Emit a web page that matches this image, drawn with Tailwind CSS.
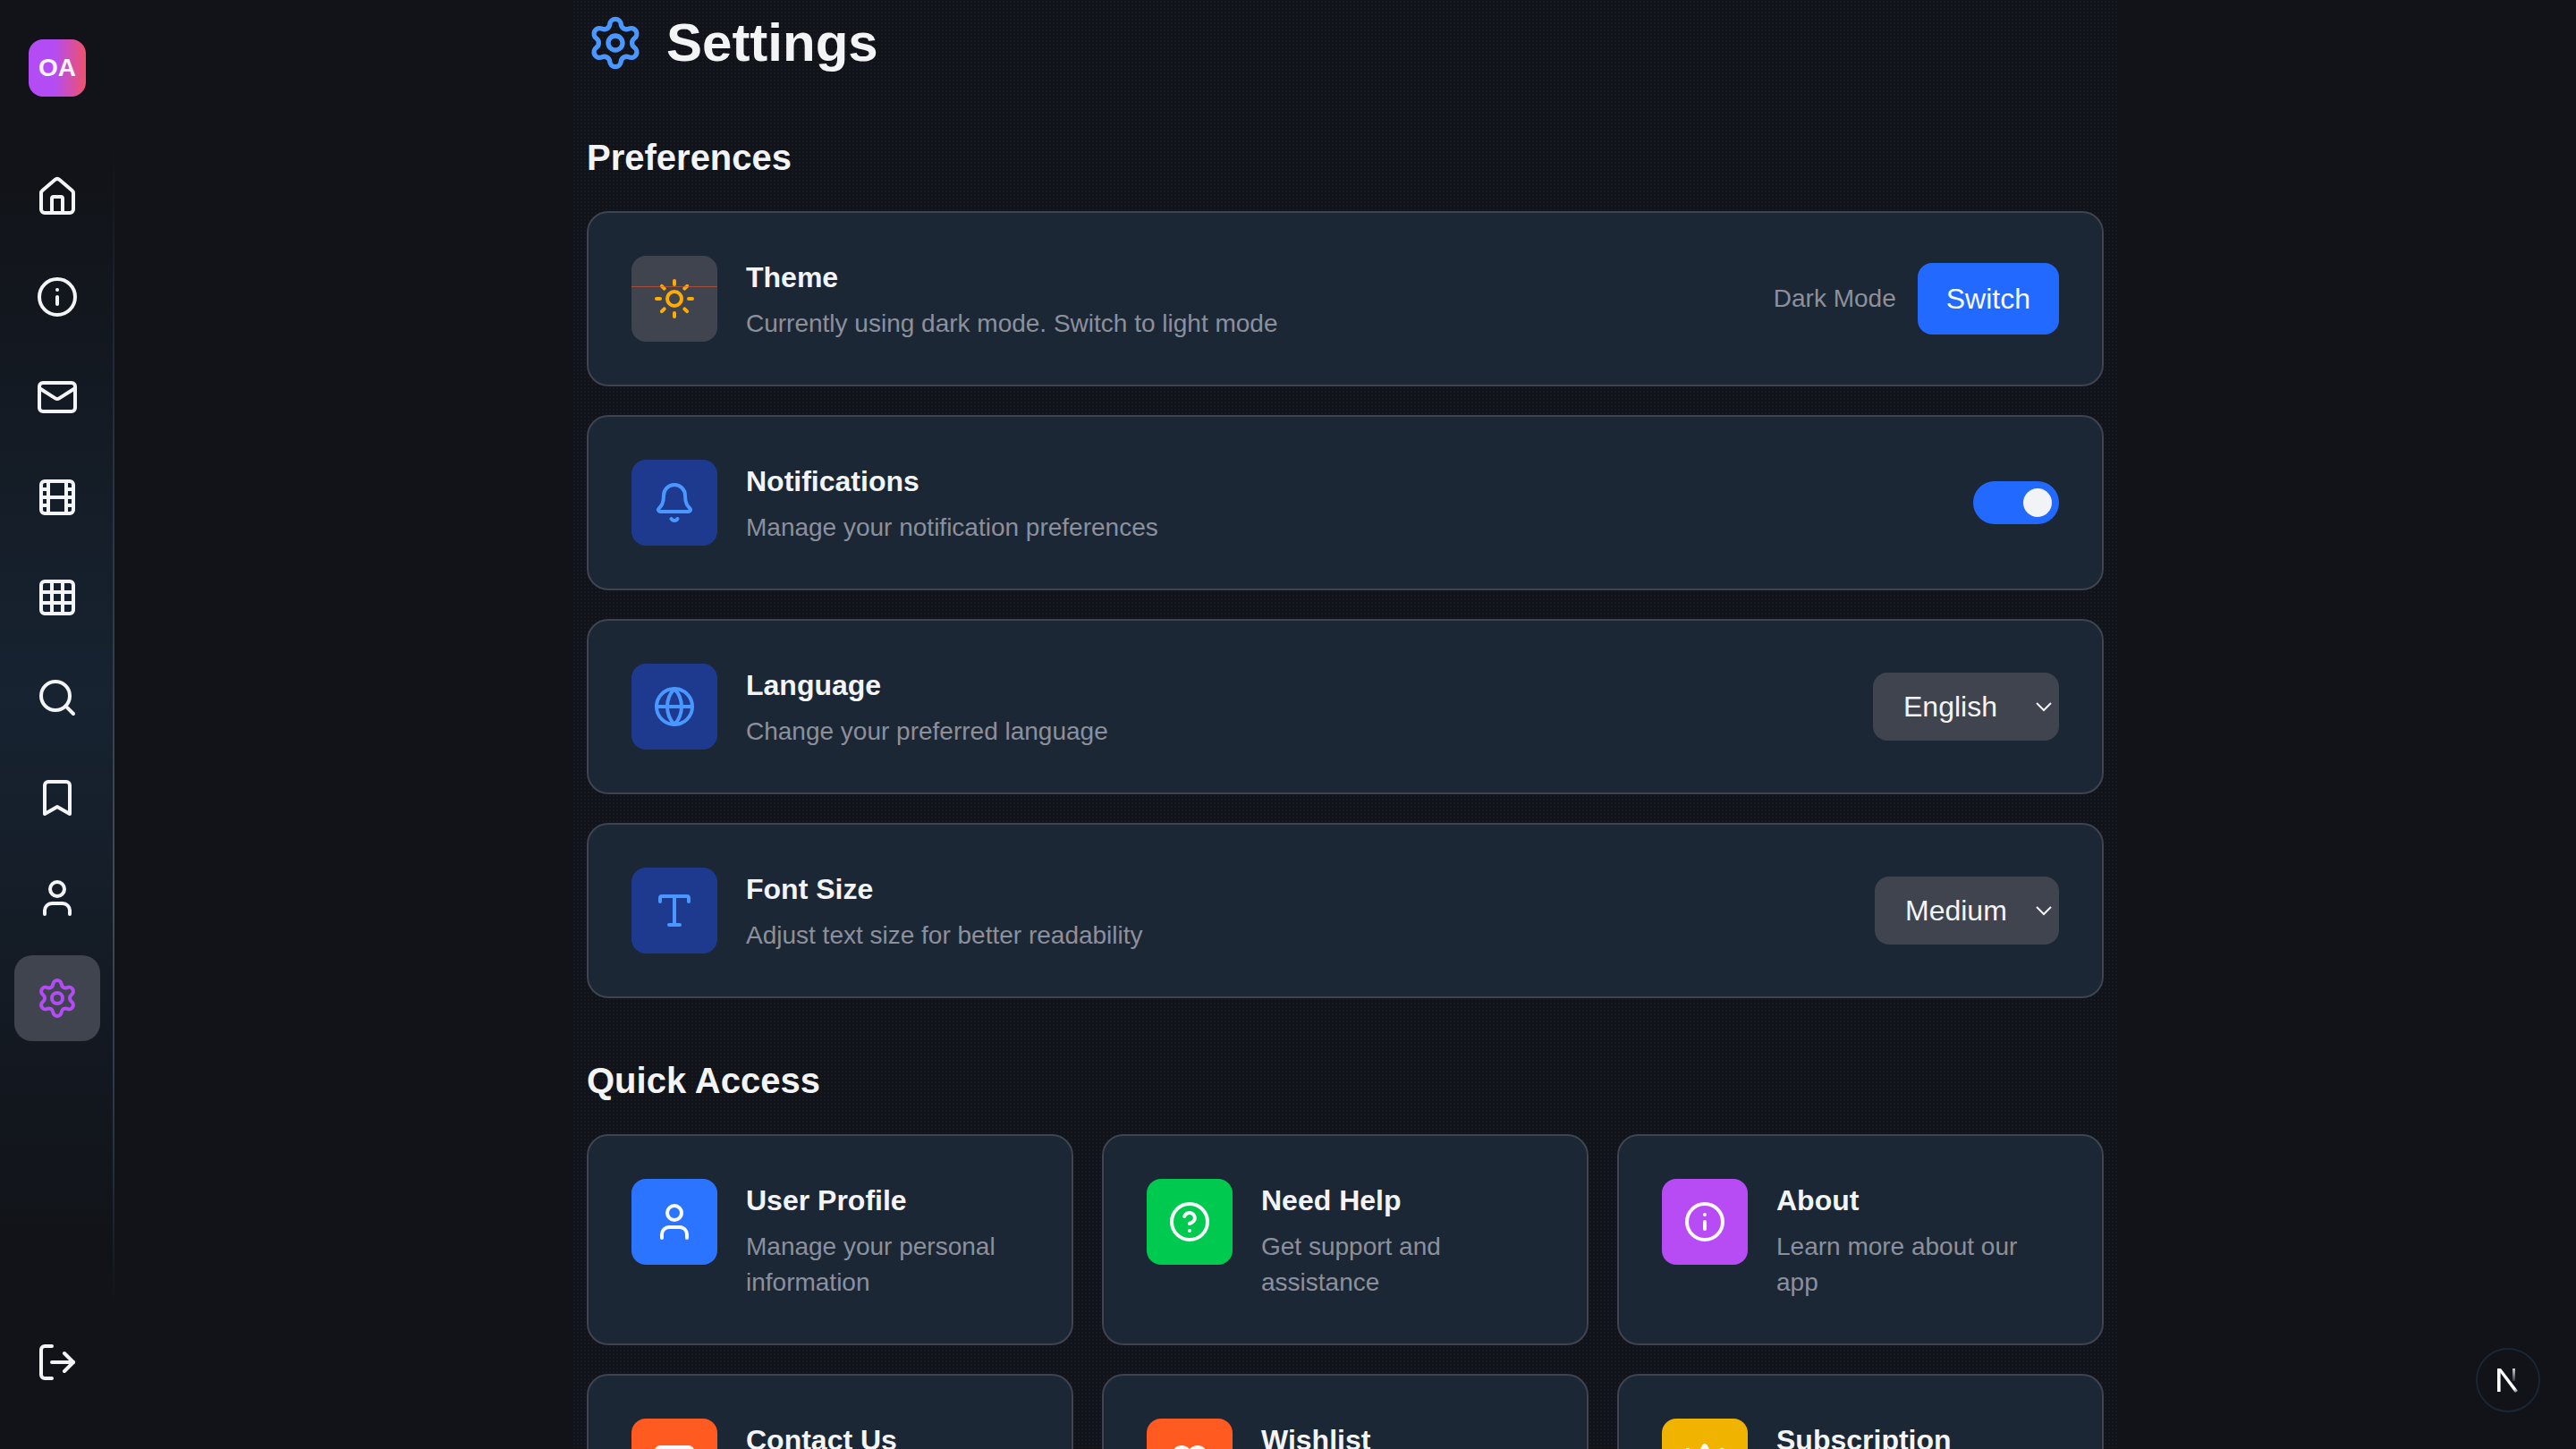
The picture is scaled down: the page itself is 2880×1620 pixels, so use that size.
<!doctype html>
<html lang="en">
<head>
<meta charset="utf-8">
<title>Settings</title>
<script src="https://cdn.jsdelivr.net/npm/@tailwindcss/browser@4"></script>
</head>
<body class="bg-[#111318] font-['Liberation_Sans',Arial,sans-serif] text-[#f3f4f6]">
<div class="relative flex h-[1620px] w-[2880px] overflow-hidden bg-[#111318]">

  <!-- Sidebar -->
  <aside class="relative flex h-full w-[128px] shrink-0 flex-col items-center bg-[linear-gradient(180deg,#111318_12%,#172331_48%,#111318_86%)] pt-[44px] pb-[49px]">
    <div class="absolute top-0 right-0 h-full w-[2px] bg-[linear-gradient(180deg,transparent_10%,#2a3443_35%,#454a56_62%,#2a3443_78%,transparent_90%)]"></div>
    <div class="flex h-16 w-16 items-center justify-center rounded-2xl bg-[linear-gradient(90deg,#b44cf5_45%,#f0526a_100%)] text-[28px] font-bold text-[#f3f4f6]">OA</div>
    <nav class="mt-16 flex flex-col gap-4">
      <a class="flex h-24 w-24 items-center justify-center rounded-[20px]"><svg class="h-12 w-12" viewBox="0 0 24 24" fill="none" stroke="currentColor" stroke-width="2" stroke-linecap="round" stroke-linejoin="round"><path d="M15 21v-8a1 1 0 0 0-1-1h-4a1 1 0 0 0-1 1v8"/><path d="M3 10a2 2 0 0 1 .709-1.528l7-5.999a2 2 0 0 1 2.582 0l7 5.999A2 2 0 0 1 21 10v9a2 2 0 0 1-2 2H5a2 2 0 0 1-2-2z"/></svg></a>
      <a class="flex h-24 w-24 items-center justify-center rounded-[20px]"><svg class="h-12 w-12" viewBox="0 0 24 24" fill="none" stroke="currentColor" stroke-width="2" stroke-linecap="round" stroke-linejoin="round"><circle cx="12" cy="12" r="10"/><path d="M12 16v-4"/><path d="M12 8h.01"/></svg></a>
      <a class="flex h-24 w-24 items-center justify-center rounded-[20px]"><svg class="h-12 w-12" viewBox="0 0 24 24" fill="none" stroke="currentColor" stroke-width="2" stroke-linecap="round" stroke-linejoin="round"><rect width="20" height="16" x="2" y="4" rx="2"/><path d="m22 7-8.97 5.7a1.94 1.94 0 0 1-2.06 0L2 7"/></svg></a>
      <a class="flex h-24 w-24 items-center justify-center rounded-[20px]"><svg class="h-12 w-12" viewBox="0 0 24 24" fill="none" stroke="currentColor" stroke-width="2" stroke-linecap="round" stroke-linejoin="round"><rect width="18" height="18" x="3" y="3" rx="2"/><path d="M7 3v18"/><path d="M3 7.5h4"/><path d="M3 12h18"/><path d="M3 16.5h4"/><path d="M17 3v18"/><path d="M17 7.5h4"/><path d="M17 16.5h4"/></svg></a>
      <a class="flex h-24 w-24 items-center justify-center rounded-[20px]"><svg class="h-12 w-12" viewBox="0 0 24 24" fill="none" stroke="currentColor" stroke-width="2" stroke-linecap="round" stroke-linejoin="round"><rect width="18" height="18" x="3" y="3" rx="2"/><path d="M3 9h18"/><path d="M3 15h18"/><path d="M9 3v18"/><path d="M15 3v18"/></svg></a>
      <a class="flex h-24 w-24 items-center justify-center rounded-[20px]"><svg class="h-12 w-12" viewBox="0 0 24 24" fill="none" stroke="currentColor" stroke-width="2" stroke-linecap="round" stroke-linejoin="round"><circle cx="11" cy="11" r="8"/><path d="m21 21-4.3-4.3"/></svg></a>
      <a class="flex h-24 w-24 items-center justify-center rounded-[20px]"><svg class="h-12 w-12" viewBox="0 0 24 24" fill="none" stroke="currentColor" stroke-width="2" stroke-linecap="round" stroke-linejoin="round"><path d="m19 21-7-4-7 4V5a2 2 0 0 1 2-2h10a2 2 0 0 1 2 2v16z"/></svg></a>
      <a class="flex h-24 w-24 items-center justify-center rounded-[20px]"><svg class="h-12 w-12" viewBox="0 0 24 24" fill="none" stroke="currentColor" stroke-width="2" stroke-linecap="round" stroke-linejoin="round"><path d="M19 21v-2a4 4 0 0 0-4-4H9a4 4 0 0 0-4 4v2"/><circle cx="12" cy="7" r="4"/></svg></a>
      <a class="flex h-24 w-24 items-center justify-center rounded-[20px] bg-[#40444f] text-[#b44cf5]"><svg class="h-12 w-12" viewBox="0 0 24 24" fill="none" stroke="currentColor" stroke-width="2" stroke-linecap="round" stroke-linejoin="round"><path d="M9.671 4.136a2.34 2.34 0 0 1 4.659 0 2.34 2.34 0 0 0 3.319 1.915 2.34 2.34 0 0 1 2.33 4.033 2.34 2.34 0 0 0 0 3.831 2.34 2.34 0 0 1-2.33 4.033 2.34 2.34 0 0 0-3.319 1.915 2.34 2.34 0 0 1-4.659 0 2.34 2.34 0 0 0-3.32-1.915 2.34 2.34 0 0 1-2.33-4.033 2.34 2.34 0 0 0 0-3.831A2.34 2.34 0 0 1 6.35 6.051a2.34 2.34 0 0 0 3.32-1.915"/><circle cx="12" cy="12" r="3"/></svg></a>
    </nav>
    <a class="mt-auto flex h-24 w-24 items-center justify-center rounded-[20px]"><svg class="h-12 w-12" viewBox="0 0 24 24" fill="none" stroke="currentColor" stroke-width="2" stroke-linecap="round" stroke-linejoin="round"><path d="m16 17 5-5-5-5"/><path d="M21 12H9"/><path d="M9 21H5a2 2 0 0 1-2-2V5a2 2 0 0 1 2-2h4"/></svg></a>
  </aside>

  <!-- Main -->
  <main class="flex h-full min-w-0 flex-1 justify-center overflow-hidden">
    <div class="h-full w-[1728px] bg-[radial-gradient(circle,#151b24_1px,transparent_1.3px)] bg-[size:4px_4px] px-4 pt-4">

      <div class="flex h-16 items-center gap-[25px]">
        <svg class="h-16 w-16 text-[#4a98ff]" viewBox="0 0 24 24" fill="none" stroke="currentColor" stroke-width="2" stroke-linecap="round" stroke-linejoin="round"><path d="M9.671 4.136a2.34 2.34 0 0 1 4.659 0 2.34 2.34 0 0 0 3.319 1.915 2.34 2.34 0 0 1 2.33 4.033 2.34 2.34 0 0 0 0 3.831 2.34 2.34 0 0 1-2.33 4.033 2.34 2.34 0 0 0-3.319 1.915 2.34 2.34 0 0 1-4.659 0 2.34 2.34 0 0 0-3.32-1.915 2.34 2.34 0 0 1-2.33-4.033 2.34 2.34 0 0 0 0-3.831A2.34 2.34 0 0 1 6.35 6.051a2.34 2.34 0 0 0 3.32-1.915"/><circle cx="12" cy="12" r="3"/></svg>
        <h1 class="text-[60px] leading-none font-bold text-[#f3f4f6]">Settings</h1>
      </div>

      <h2 class="mt-[68px] mb-8 text-[40px] leading-[56px] font-bold text-[#f3f4f6]">Preferences</h2>

      <div class="flex flex-col gap-8">
        <!-- Theme -->
        <section class="flex items-center justify-between rounded-3xl border-2 border-[#3f4450] bg-[#1c2735] p-12">
          <div class="flex items-center gap-8">
            <div class="relative flex h-24 w-24 items-center justify-center overflow-hidden rounded-2xl bg-[#40444f] text-[#ffab00]">
              <svg class="h-12 w-12" viewBox="0 0 24 24" fill="none" stroke="currentColor" stroke-width="2" stroke-linecap="round" stroke-linejoin="round"><circle cx="12" cy="12" r="4"/><path d="M12 2v2"/><path d="M12 20v2"/><path d="m4.93 4.93 1.41 1.41"/><path d="m17.66 17.66 1.41 1.41"/><path d="M2 12h2"/><path d="M20 12h2"/><path d="m6.34 17.66-1.41 1.41"/><path d="m19.07 4.93-1.41 1.41"/></svg>
              <div class="absolute top-[34px] right-0 left-0 h-px bg-[#e8552a]/60"></div>
            </div>
            <div>
              <h3 class="text-[32px] leading-[48px] font-bold text-[#f3f4f6]">Theme</h3>
              <p class="mt-2 text-[28px] leading-10 text-[#8c909c]">Currently using dark mode. Switch to light mode</p>
            </div>
          </div>
          <div class="flex items-center gap-6">
            <span class="text-[28px] leading-10 text-[#8c909c]">Dark Mode</span>
            <button class="h-20 rounded-2xl bg-[#2269ff] px-8 text-[32px] text-[#f8f9fb]">Switch</button>
          </div>
        </section>

        <!-- Notifications -->
        <section class="flex items-center justify-between rounded-3xl border-2 border-[#3f4450] bg-[#1c2735] p-12">
          <div class="flex items-center gap-8">
            <div class="flex h-24 w-24 items-center justify-center rounded-2xl bg-[#1e3a8f] text-[#4a98ff]">
              <svg class="h-12 w-12" viewBox="0 0 24 24" fill="none" stroke="currentColor" stroke-width="2" stroke-linecap="round" stroke-linejoin="round"><path d="M10.268 21a2 2 0 0 0 3.464 0"/><path d="M3.262 15.326A1 1 0 0 0 4 17h16a1 1 0 0 0 .74-1.673C19.41 13.956 18 12.499 18 8A6 6 0 0 0 6 8c0 4.499-1.411 5.956-2.738 7.326"/></svg>
            </div>
            <div>
              <h3 class="text-[32px] leading-[48px] font-bold text-[#f3f4f6]">Notifications</h3>
              <p class="mt-2 text-[28px] leading-10 text-[#8c909c]">Manage your notification preferences</p>
            </div>
          </div>
          <div class="flex h-12 w-24 items-center justify-end rounded-full bg-[#2269ff] pr-2">
            <div class="h-8 w-8 rounded-full bg-[#f1f3f6]"></div>
          </div>
        </section>

        <!-- Language -->
        <section class="flex items-center justify-between rounded-3xl border-2 border-[#3f4450] bg-[#1c2735] p-12">
          <div class="flex items-center gap-8">
            <div class="flex h-24 w-24 items-center justify-center rounded-2xl bg-[#1e3a8f] text-[#4a98ff]">
              <svg class="h-12 w-12" viewBox="0 0 24 24" fill="none" stroke="currentColor" stroke-width="2" stroke-linecap="round" stroke-linejoin="round"><circle cx="12" cy="12" r="10"/><path d="M12 2a14.5 14.5 0 0 0 0 20 14.5 14.5 0 0 0 0-20"/><path d="M2 12h20"/></svg>
            </div>
            <div>
              <h3 class="text-[32px] leading-[48px] font-bold text-[#f3f4f6]">Language</h3>
              <p class="mt-2 text-[28px] leading-10 text-[#8c909c]">Change your preferred language</p>
            </div>
          </div>
          <div class="flex h-[76px] w-[208px] items-center justify-between rounded-2xl bg-[#40444f] pr-[8px] pl-[34px] text-[32px] text-[#f3f4f6]">
            <span>English</span>
            <svg class="h-[18px] w-[18px]" viewBox="0 0 18 18" fill="none" stroke="currentColor" stroke-width="2"><path d="M1 5l8 8 8-8"/></svg>
          </div>
        </section>

        <!-- Font Size -->
        <section class="flex items-center justify-between rounded-3xl border-2 border-[#3f4450] bg-[#1c2735] p-12">
          <div class="flex items-center gap-8">
            <div class="flex h-24 w-24 items-center justify-center rounded-2xl bg-[#1e3a8f] text-[#4a98ff]">
              <svg class="h-12 w-12" viewBox="0 0 24 24" fill="none" stroke="currentColor" stroke-width="2" stroke-linecap="round" stroke-linejoin="round"><path d="M12 4v16"/><path d="M4 7V5a1 1 0 0 1 1-1h14a1 1 0 0 1 1 1v2"/><path d="M9 20h6"/></svg>
            </div>
            <div>
              <h3 class="text-[32px] leading-[48px] font-bold text-[#f3f4f6]">Font Size</h3>
              <p class="mt-2 text-[28px] leading-10 text-[#8c909c]">Adjust text size for better readability</p>
            </div>
          </div>
          <div class="flex h-[76px] w-[206px] items-center justify-between rounded-2xl bg-[#40444f] pr-[8px] pl-[34px] text-[32px] text-[#f3f4f6]">
            <span>Medium</span>
            <svg class="h-[18px] w-[18px]" viewBox="0 0 18 18" fill="none" stroke="currentColor" stroke-width="2"><path d="M1 5l8 8 8-8"/></svg>
          </div>
        </section>
      </div>

      <h2 class="mt-16 mb-8 text-[40px] leading-[56px] font-bold text-[#f3f4f6]">Quick Access</h2>

      <div class="grid grid-cols-3 gap-8">
        <section class="flex h-[236px] gap-8 rounded-3xl border-2 border-[#3f4450] bg-[#1c2735] p-12">
          <div class="flex h-24 w-24 shrink-0 items-center justify-center rounded-2xl bg-[#2a74ff] text-[#f8f9fb]">
            <svg class="h-12 w-12" viewBox="0 0 24 24" fill="none" stroke="currentColor" stroke-width="2" stroke-linecap="round" stroke-linejoin="round"><path d="M19 21v-2a4 4 0 0 0-4-4H9a4 4 0 0 0-4 4v2"/><circle cx="12" cy="7" r="4"/></svg>
          </div>
          <div>
            <h3 class="text-[32px] leading-[48px] font-bold text-[#f3f4f6]">User Profile</h3>
            <p class="mt-2 text-[28px] leading-10 text-[#8c909c]">Manage your personal information</p>
          </div>
        </section>
        <section class="flex h-[236px] gap-8 rounded-3xl border-2 border-[#3f4450] bg-[#1c2735] p-12">
          <div class="flex h-24 w-24 shrink-0 items-center justify-center rounded-2xl bg-[#00c950] text-[#f8f9fb]">
            <svg class="h-12 w-12" viewBox="0 0 24 24" fill="none" stroke="currentColor" stroke-width="2" stroke-linecap="round" stroke-linejoin="round"><circle cx="12" cy="12" r="10"/><path d="M9.09 9a3 3 0 0 1 5.83 1c0 2-3 3-3 3"/><path d="M12 17h.01"/></svg>
          </div>
          <div>
            <h3 class="text-[32px] leading-[48px] font-bold text-[#f3f4f6]">Need Help</h3>
            <p class="mt-2 text-[28px] leading-10 text-[#8c909c]">Get support and assistance</p>
          </div>
        </section>
        <section class="flex h-[236px] gap-8 rounded-3xl border-2 border-[#3f4450] bg-[#1c2735] p-12">
          <div class="flex h-24 w-24 shrink-0 items-center justify-center rounded-2xl bg-[#b74cf5] text-[#f8f9fb]">
            <svg class="h-12 w-12" viewBox="0 0 24 24" fill="none" stroke="currentColor" stroke-width="2" stroke-linecap="round" stroke-linejoin="round"><circle cx="12" cy="12" r="10"/><path d="M12 16v-4"/><path d="M12 8h.01"/></svg>
          </div>
          <div>
            <h3 class="text-[32px] leading-[48px] font-bold text-[#f3f4f6]">About</h3>
            <p class="mt-2 text-[28px] leading-10 text-[#8c909c]">Learn more about our app</p>
          </div>
        </section>

        <section class="flex h-[236px] gap-8 rounded-3xl border-2 border-[#3f4450] bg-[#1c2735] p-12">
          <div class="flex h-24 w-24 shrink-0 items-center justify-center rounded-2xl bg-[#ff5a1f] text-[#f8f9fb]">
            <svg class="h-12 w-12" viewBox="0 0 24 24" fill="none" stroke="currentColor" stroke-width="2" stroke-linecap="round" stroke-linejoin="round"><rect width="20" height="16" x="2" y="4" rx="2"/><path d="m22 7-8.97 5.7a1.94 1.94 0 0 1-2.06 0L2 7"/></svg>
          </div>
          <div><h3 class="text-[32px] leading-[48px] font-bold text-[#f3f4f6]">Contact Us</h3></div>
        </section>
        <section class="flex h-[236px] gap-8 rounded-3xl border-2 border-[#3f4450] bg-[#1c2735] p-12">
          <div class="flex h-24 w-24 shrink-0 items-center justify-center rounded-2xl bg-[#ff5a1f] text-[#f8f9fb]">
            <svg class="h-12 w-12" viewBox="0 0 24 24" fill="currentColor" stroke="none"><path d="M19 14c1.49-1.46 3-3.21 3-5.5A5.5 5.5 0 0 0 16.5 3c-1.76 0-3 .5-4.5 2-1.5-1.5-2.74-2-4.5-2A5.5 5.5 0 0 0 2 8.5c0 2.3 1.5 4.05 3 5.5l7 7Z"/></svg>
          </div>
          <div><h3 class="text-[32px] leading-[48px] font-bold text-[#f3f4f6]">Wishlist</h3></div>
        </section>
        <section class="flex h-[236px] gap-8 rounded-3xl border-2 border-[#3f4450] bg-[#1c2735] p-12">
          <div class="flex h-24 w-24 shrink-0 items-center justify-center rounded-2xl bg-[#f0b400] text-[#f8f9fb]">
            <svg class="h-12 w-12" viewBox="0 0 24 24" fill="none" stroke="currentColor" stroke-width="2" stroke-linecap="round" stroke-linejoin="round"><path d="M11.562 3.266a.5.5 0 0 1 .876 0L15.39 8.87a1 1 0 0 0 1.516.294L21.183 5.5a.5.5 0 0 1 .798.519l-2.834 10.246a1 1 0 0 1-.956.734H5.81a1 1 0 0 1-.957-.734L2.02 6.02a.5.5 0 0 1 .798-.519l4.276 3.664a1 1 0 0 0 1.516-.294z"/><path d="M5 21h14"/></svg>
          </div>
          <div><h3 class="text-[32px] leading-[48px] font-bold text-[#f3f4f6]">Subscription</h3></div>
        </section>
      </div>
    </div>
  </main>

  <!-- Dev badge -->
  <div class="absolute top-[1507px] left-[2768px] flex h-[72px] w-[72px] items-center justify-center rounded-full border-2 border-[#1b2635] bg-[#111318]">
    <svg class="h-[28px] w-[28px]" viewBox="0 0 28 28" fill="none">
      <defs>
        <linearGradient id="nd" x1="14" y1="12" x2="25" y2="28" gradientUnits="userSpaceOnUse"><stop offset="0" stop-color="#fff"/><stop offset="0.7" stop-color="#fff"/><stop offset="1" stop-color="#fff" stop-opacity="0.3"/></linearGradient>
        <linearGradient id="ns" x1="20" y1="1" x2="20" y2="15" gradientUnits="userSpaceOnUse"><stop offset="0" stop-color="#fff" stop-opacity="0.8"/><stop offset="1" stop-color="#fff" stop-opacity="0.15"/></linearGradient>
      </defs>
      <path d="M2 1h3.6v26H2z" fill="#fff"/>
      <path d="M2 1h4l19 25-3 2z" fill="url(#nd)"/>
      <path d="M19 1h3v14h-3z" fill="url(#ns)"/>
    </svg>
  </div>
</div>
</body>
</html>
